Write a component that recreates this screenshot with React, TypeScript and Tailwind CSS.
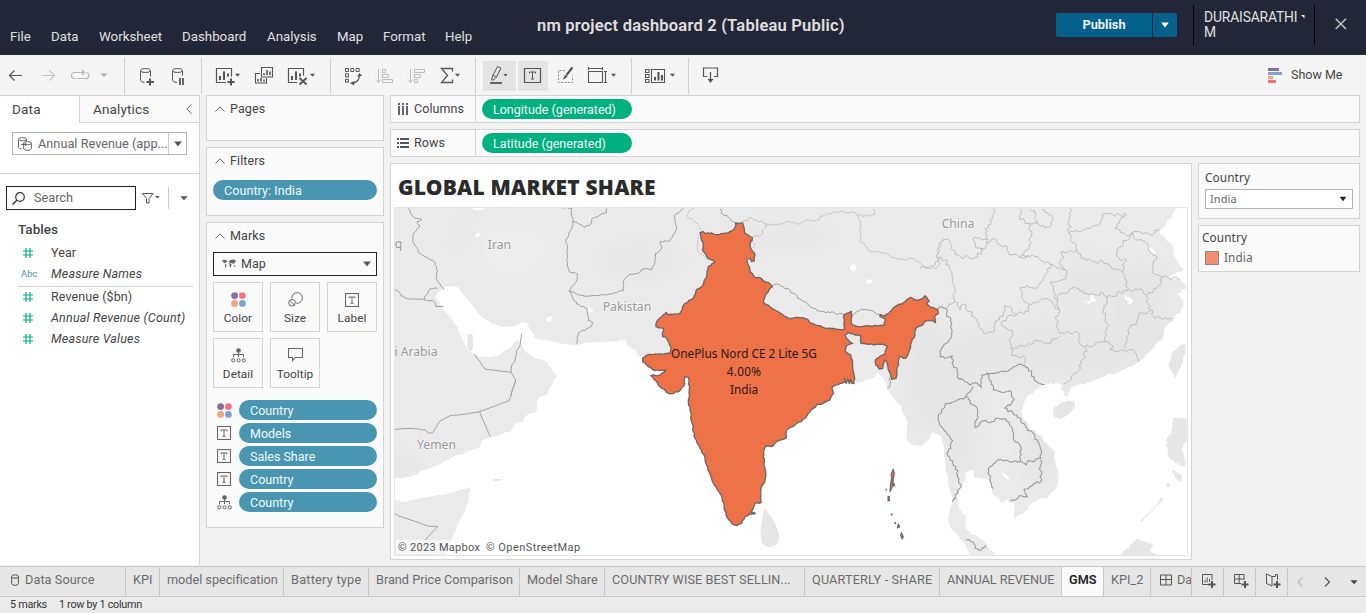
import React from "react";

/* ---------- helpers ---------- */

// Builds a wavy path from control points by displacing evenly spaced steps along each segment.
function jag(points: string, amp: number, step = 7, close = false): string {
  const pts = points.trim().split(/\s+/).map((p) => p.split(",").map(Number));
  if (close) pts.push(pts[0]);
  let seed = 7 + pts.length * 13;
  const rnd = () => {
    seed = (seed * 16807) % 2147483647;
    return seed / 2147483647 - 0.5;
  };
  let d = `M${pts[0][0]} ${pts[0][1]}`;
  for (let i = 1; i < pts.length; i++) {
    const [x0, y0] = pts[i - 1];
    const [x1, y1] = pts[i];
    const len = Math.hypot(x1 - x0, y1 - y0);
    const n = Math.max(1, Math.round(len / step));
    for (let k = 1; k < n; k++) {
      const o = rnd() * amp * 2;
      d += `L${(x0 + ((x1 - x0) * k) / n - ((y1 - y0) / len) * o).toFixed(1)} ${(y0 + ((y1 - y0) * k) / n + ((x1 - x0) / len) * o).toFixed(1)}`;
    }
    d += `L${x1} ${y1}`;
  }
  return close ? d + "Z" : d;
}

const Caret = ({ x, y, c = "#555", s = 3 }: { x: number; y: number; c?: string; s?: number }) => (
  <path d={`M${x - s} ${y - s / 2}h${s * 2}l${-s} ${s + 0.5}z`} fill={c} stroke="none" />
);

const Down = ({ className = "" }: { className?: string }) => (
  <svg viewBox="0 0 8 6" className={`h-[6px] w-[8px] shrink-0 ${className}`}>
    <path d="M0.2 0.5h7.6L4 5.5z" fill="currentColor" />
  </svg>
);

// A stretch of toolbar artwork, drawn in window coordinates.
const Tool = ({ x, className, children }: { x: [number, number]; className: string; children: React.ReactNode }) => (
  <svg viewBox={`${x[0]} 55 ${x[1]} 40`} className={`h-[40px] shrink-0 ${className}`} fill="none" stroke="#555" strokeWidth="1">
    {children}
  </svg>
);
const Sep = () => <div className="mt-[3px] h-[36px] w-px shrink-0 bg-[#d0d0d0]" />;

const TIcon = () => (
  <svg viewBox="0 0 14 14" className="h-[14px] w-[14px]" fill="none" stroke="#666">
    <rect x=".5" y=".5" width="13" height="13" strokeWidth="1.1" />
    <path d="M4 5.200V4h6v1.200M7 4v6.300M5.500 10.300h3" strokeWidth="1" />
  </svg>
);
const ColorIcon = () => (
  <svg viewBox="0 0 15 15" className="h-[15px] w-[15px]">
    <circle cx="3.600" cy="3.600" r="3.400" fill="#86709a" />
    <circle cx="11.400" cy="3.600" r="3.400" fill="#fa6f80" />
    <circle cx="3.600" cy="11.400" r="3.400" fill="#f4a57c" />
    <circle cx="11.400" cy="11.400" r="3.400" fill="#7ea5cf" />
  </svg>
);
const DetailIcon = () => (
  <svg viewBox="0 0 15 15" className="h-[15px] w-[15px]" fill="none" stroke="#666">
    <circle cx="7.500" cy="2.500" r="2.300" fill="#666" stroke="none" />
    <path d="M7.500 4v5M2.500 9.200V6.500h10v2.700" />
    <circle cx="2.200" cy="12.300" r="1.600" />
    <circle cx="7.500" cy="12.300" r="1.600" />
    <circle cx="12.800" cy="12.300" r="1.600" />
  </svg>
);
const SizeIcon = () => (
  <svg viewBox="0 0 15 15" className="h-[15px] w-[15px]" fill="none" stroke="#666">
    <path d="M3.800 6.200A5.300 5.300 0 1 1 8.200 11.200" />
    <circle cx="4" cy="10.800" r="3.300" />
    <path d="M2 8.600l4 4.200" />
  </svg>
);
const TooltipIcon = () => (
  <svg viewBox="0 0 15 15" className="h-[15px] w-[15px]" fill="none" stroke="#666" strokeWidth="1.100">
    <path d="M.5 .5h14v9H7.200L4.500 12.500v-3h-4z" />
  </svg>
);

/* ---------- header ---------- */

const Header = () => (
  <header className="flex h-[55px] shrink-0 bg-[#232636] text-[#e0e0e0]">
    <nav className="flex h-full w-[537px] shrink-0 pl-[10px] pt-[28px] text-[13.3px] leading-[17px]">
      <span className="w-[41px]">File</span>
      <span className="w-[48px]">Data</span>
      <span className="w-[83px]">Worksheet</span>
      <span className="w-[85px]">Dashboard</span>
      <span className="w-[70px]">Analysis</span>
      <span className="w-[46px]">Map</span>
      <span className="w-[62px]">Format</span>
      <span>Help</span>
    </nav>
    <h1 className="w-[519px] shrink-0 whitespace-nowrap pt-[15px] text-[16.500px] font-semibold leading-[21px] tracking-[0.210px]">nm project dashboard 2 (Tableau Public)</h1>
    <div className="mt-[13px] flex h-[24px] w-[121px] shrink-0 overflow-hidden rounded-[2px] bg-[#03618b]">
      <div className="flex w-[96px] items-center justify-center text-[12.800px] font-bold text-[#f0f0f0]">Publish</div>
      <div className="flex flex-1 items-center justify-center border-l border-[#232636] text-white">
        <Down />
      </div>
    </div>
    <div className="ml-[16px] mt-[5px] flex h-[40px] w-[122px] shrink-0 border-x border-black pl-[10px] pt-[5px] text-[13.800px] leading-[15px] tracking-[-0.120px]">
      <div className="w-[97px] shrink-0">
        DURAISARATHI
        <br />M
      </div>
      <svg viewBox="0 0 4 4" className="mt-[5px] h-[4px] w-[4px] shrink-0">
        <path d="M0 0h3.500v3.500z" fill="#e6e6e6" />
      </svg>
    </div>
    <svg viewBox="0 0 12 12" className="ml-[20px] mt-[18px] h-[12px] w-[12px]" stroke="#c3c3c8" strokeWidth="1.500">
      <path d="M.7 .7l10.300 10.300M11 .7L.7 11" />
    </svg>
  </header>
);

/* ---------- toolbar ---------- */

const Toolbar = () => (
  <div className="flex h-[40px] shrink-0 bg-[#f5f5f5]">
    <Tool x={[0, 124]} className="w-[124px]">
      <path d="M22 75.500H9.500M14.500 70.500l-5 5 5 5" strokeWidth="1.200" />
      <path d="M42 75.500h12.500M49.500 70.500l5 5-5 5" stroke="#c4c4c4" strokeWidth="1.200" />
      <path d="M76 78.500h-1.500a3 3 0 0 1 0-6h8.500M77 78.500h8a3 3 0 0 0 1.500-6" stroke="#b8b8b8" strokeWidth="1.200" />
      <path d="M82 69.500v6l3.500-3z" fill="#b8b8b8" stroke="none" />
      <Caret x={104} y={75} c="#b8b8b8" s={3.700} />
    </Tool>
    <Sep />
    <Tool x={[125, 76]} className="w-[76px]">
      <ellipse cx="145.500" cy="70.500" rx="5" ry="2" />
      <path d="M140.500 70.500v10q.5 1.500 4 2M150.500 70.500v6" />
      <path d="M150 78.500v7M146.500 82h7.500" strokeWidth="2" />
      <ellipse cx="177.500" cy="70.500" rx="5" ry="2" />
      <path d="M172.500 70.500v10q.5 1.500 4.500 2M182.500 70.500v5" />
      <path d="M180 78v7M183 78v7" strokeWidth="1.800" />
    </Tool>
    <Sep />
    <Tool x={[202, 128]} className="w-[128px]">
      <path d="M226 82.500h-9.500v-14h15v8" strokeWidth="1.200" />
      <path d="M220 76v4M224 71.500v8.500M228 73.500v3" strokeWidth="2" />
      <path d="M231 78.500v7M227.500 82h7" strokeWidth="2" />
      <Caret x={237.500} y={75} s={2.500} />
      <path d="M260 73.500h-4.500v9.500h11v-5M261.500 67.500h11v9.500h-11z" strokeWidth="1.100" />
      <path d="M264 73v2M267 70v5M270 71.500v3.500M258 79v2.500M261 78v3.500M264 79.500v2" strokeWidth="1.600" />
      <path d="M297 82.500h-8.500v-14h15v7" strokeWidth="1.200" />
      <path d="M292 76v4M296 71.500v8.500M300 73.500v3" strokeWidth="2" />
      <path d="M299.500 78l7 6.500M306.500 78l-7 6.500" strokeWidth="1.800" />
      <Caret x={312.500} y={75} s={2.500} />
    </Tool>
    <Sep />
    <Tool x={[331, 144]} className="w-[144px]">
      <path d="M345.500 68.500h3v3h-3zM350.800 68.500h3v3h-3zM356.200 68.500h3v3h-3zM345.500 73.800h3v3h-3zM345.500 79.200h3v3h-3z" />
      <path d="M359.500 75q0 7-6.500 8" strokeWidth="1.200" />
      <path d="M357 76.500l2.500-3.500 2.500 3zM354.500 81l-4.500 2 4 2.500z" fill="#555" stroke="none" />
      <g stroke="#bdbdbd">
        <path d="M378.500 69v13M376 79.500l2.500 3 2.500-3M382.500 69.500h3v3h-3zM382.500 74.500h6v3h-6zM382.500 79.500h10v3h-10z" />
        <path d="M410.500 69v13M408 79.500l2.500 3 2.500-3M414.500 69.500h10v3h-10zM414.500 74.500h6v3h-6zM414.500 79.500h3v3h-3z" />
      </g>
      <path d="M452.500 71.500v-3h-11l6 7-6 7h11v-3" strokeWidth="1.300" />
      <Caret x={457.500} y={75} s={2.500} />
    </Tool>
    <Sep />
    <Tool x={[476, 155]} className="w-[155px]">
      <path d="M483 61h33v30h-33zM518 61h30v30h-30z" fill="#e4e4e4" stroke="none" />
      <path d="M491.500 80l1.500-5 4.500-8.500 3.500 1.500-4.500 9-3 3zM493 75l3.500 2.500" />
      <path d="M490 83h12" strokeWidth="1.800" />
      <Caret x={505.500} y={75} s={2.200} />
      <path d="M524.500 68.500h16v14h-16z" strokeWidth="1.200" />
      <path d="M529.500 73.500v-1.500h6v1.500M532.500 72v7M531 79h3" />
      <path d="M565 70.500h-6.500v12h14v-7" stroke="#888" strokeDasharray="2 1.500" />
      <path d="M572.500 67.500l-6 7.500" strokeWidth="2.200" />
      <path d="M565.500 75l1.500 1.500-3.500 2.500z" fill="#555" />
      <path d="M588.500 71.500h14v11h-14zM588.500 67v3M602.500 67v3M588.500 68.500h14M604 71.500h3M604 82.500h3M605.500 71.500v11" strokeWidth="1.100" />
      <Caret x={613.500} y={75} s={2.500} />
    </Tool>
    <Sep />
    <Tool x={[632, 56]} className="w-[56px]">
      <path d="M645.500 69.500h3.500v3h-3.500zM645.500 74.500h3.500v3h-3.500zM645.500 79.500h3.500v3h-3.500zM651.500 69.500h13v13h-13z" strokeWidth="1.100" />
      <path d="M655 77v3.500M658.500 72v8.500M662 75v5.500" strokeWidth="2" />
      <Caret x={672.500} y={75} s={2.500} />
    </Tool>
    <Sep />
    <Tool x={[689, 578]} className="w-[578px]">
      <path d="M707 76.500h-3.500v-8.500h14v8.500h-3.500" strokeWidth="1.200" />
      <path d="M710.500 72v8" strokeWidth="1.300" />
      <path d="M707.500 79h6l-3 4z" fill="#555" stroke="none" />
    </Tool>
    <div className="flex items-center whitespace-nowrap pt-[1px] text-[12.500px] text-[#444]">
      <svg viewBox="0 0 15 15" className="mb-[1px] mr-[9px] h-[15px] w-[15px]">
        <path d="M1 0h11v3H1z" fill="#86709a" />
        <path d="M1 4h14v3H1z" fill="#7ea5cf" />
        <path d="M1 8h5v3H1z" fill="#f4a57c" />
        <path d="M1 12h8v3H1z" fill="#fa6f80" />
      </svg>
      Show Me
    </div>
  </div>
);

/* ---------- data pane ---------- */

const Hash = () => (
  <svg viewBox="0 0 10 10" className="mb-[2px] ml-[2px] h-[10px] w-[10px]" stroke="#00b180">
    <path d="M3 0v10M7 0v10M0 3h10M0 7h10" strokeWidth="1.200" />
  </svg>
);

const Field = ({ label, abc, italic }: { label: string; abc?: boolean; italic?: boolean }) => (
  <div className="flex h-[21px] items-center">
    <div className="w-[30px] shrink-0 text-[9.500px] text-[#4996b2]">{abc ? "Abc" : <Hash />}</div>
    <span className={italic ? "whitespace-nowrap text-[12.500px] italic tracking-[0.200px]" : "text-[12.500px] tracking-[0.100px]"}>{label}</span>
  </div>
);

const DataPane = () => (
  <aside className="flex w-[200px] shrink-0 flex-col border-r border-[#d4d4d4] bg-white text-[#444]">
    <div className="flex h-[28px] shrink-0 text-[13.500px] leading-[28px]">
      <div className="w-[79px] border-t border-[#d4d4d4] pl-[12px] leading-[26px] tracking-[0.200px]">Data</div>
      <div className="flex flex-1 items-center border-b border-l border-t border-[#d4d4d4] bg-[#fafafa] pl-[13px] tracking-[0.150px]">
        Analytics
        <svg viewBox="0 0 6 10" className="ml-auto mr-[7px] h-[10px] w-[6px]" fill="none" stroke="#666">
          <path d="M5.500 .5L.8 5l4.700 4.500" />
        </svg>
      </div>
    </div>
    <div className="flex h-[51px] shrink-0 items-start border-b border-[#d4d4d4] pl-[12px] pt-[9px]">
      <div className="flex h-[23px] w-[175px] items-center border border-[#b5b5b5] text-[12.700px] text-[#666]">
        <svg viewBox="0 0 14 14" className="ml-[5px] h-[14px] w-[14px] shrink-0" fill="none" stroke="#666">
          <ellipse cx="4.500" cy="2.200" rx="4" ry="1.600" />
          <path d="M.5 2.200v8q.5 1.500 3 1.700M8.500 2.200v2" />
          <ellipse cx="9.500" cy="6.200" rx="3.900" ry="1.600" />
          <path d="M5.600 6.200v5.500q1 1.700 4 1.700t3.800-1.700V6.200M3 7.500h5.500M7 6l1.700 1.500L7 9" />
        </svg>
        <span className="ml-[6px] w-[130px] shrink-0 whitespace-nowrap tracking-[0.030px]">Annual Revenue (app...</span>
        <div className="flex h-full flex-1 items-center justify-center border-l border-[#ccc] text-[#555]">
          <Down />
        </div>
      </div>
    </div>
    <div className="flex shrink-0 pl-[6px] pt-[12px]">
      <div className="flex h-[24px] w-[130px] shrink-0 items-center border border-[#222] text-[12.700px] text-[#666]">
        <svg viewBox="0 0 13 13" className="ml-[5px] mr-[9px] h-[13px] w-[13px]" fill="none" stroke="#333" strokeWidth="1.200">
          <circle cx="8" cy="5" r="4.300" />
          <path d="M5 8L.5 12.500" strokeWidth="1.500" />
        </svg>
        Search
      </div>
      <svg viewBox="136 186 63 24" className="h-[24px] w-[63px] shrink-0" fill="none" stroke="#555">
        <path d="M142.500 193.500h10.500l-4 5v4.500h-2.500v-4.500z" />
        <Caret x={157.500} y={197} s={2.200} />
        <path d="M168.500 187v22" stroke="#ccc" />
        <Caret x={184} y={198} s={3.700} />
      </svg>
    </div>
    <div className="pl-[18px] pt-[11px] text-[13.500px] font-medium leading-[16px]">Tables</div>
    <div className="mr-[6px] pl-[21px] pt-[6px]">
      <Field label="Year" />
      <Field label="Measure Names" abc italic />
      <div className="-ml-[3px] mt-[1px] h-px bg-[#d4d4d4]" />
      <Field label="Revenue ($bn)" />
      <Field label="Annual Revenue (Count)" italic />
      <Field label="Measure Values" italic />
    </div>
  </aside>
);

/* ---------- cards ---------- */

const CardTitle = ({ children }: { children: React.ReactNode }) => (
  <div className="flex items-center text-[12.500px] leading-[16px] tracking-[0.100px] text-[#444]">
    <svg viewBox="0 0 10 6" className="ml-[8px] mr-[5px] h-[6px] w-[10px]" fill="none" stroke="#666">
      <path d="M.5 5.500L5 .8l4.500 4.700" />
    </svg>
    {children}
  </div>
);

const Pill = ({ children, className }: { children: React.ReactNode; className: string }) => (
  <div className={`flex h-[20px] items-center rounded-full pl-[11px] pt-[2px] text-[12.500px] leading-[18px] text-[#f4f8fa] ${className}`}>{children}</div>
);

const MarkButton = ({ icon, label }: { icon: React.ReactNode; label: string }) => (
  <div className="flex h-[50px] w-[50px] flex-col items-center border border-[#d4d4d4] pt-[9px] text-[11.800px] leading-[14px] tracking-[0.050px] text-[#444]">
    <div className="flex h-[15px] items-center">{icon}</div>
    <span className="mt-[4px]">{label}</span>
  </div>
);

const MarkRow = ({ icon, label }: { icon: React.ReactNode; label: string }) => (
  <div className="flex items-center">
    <div className="flex w-[30px] shrink-0 items-center justify-center">{icon}</div>
    <Pill className="w-[138px] bg-[#4996b2]">{label}</Pill>
  </div>
);

const Cards = () => (
  <div className="flex w-[178px] shrink-0 flex-col gap-[6px]">
    <section className="h-[46px] border border-[#d4d4d4] bg-[#fafafa] pt-[5px]">
      <CardTitle>Pages</CardTitle>
    </section>
    <section className="h-[69px] border border-[#d4d4d4] bg-[#fafafa] pt-[5px]">
      <CardTitle>Filters</CardTitle>
      <Pill className="ml-[6px] mt-[11px] w-[164px] bg-[#4996b2] tracking-[0.080px]">Country: India</Pill>
    </section>
    <section className="h-[306px] border border-[#d4d4d4] bg-[#fafafa] pt-[5px]">
      <CardTitle>Marks</CardTitle>
      <div className="ml-[6px] mt-[8px] flex h-[24px] w-[164px] items-center border border-[#222] text-[12.500px] text-[#444]">
        <svg viewBox="0 0 14 10" className="ml-[8px] mr-[5px] h-[10px] w-[14px]" fill="#666">
          <path d="M0 1.500l2.500-.7 2 .5.800.9-1.300 1.300-.8.9-1.200-.6L1 3zM3.200 5l1.500.8-.7 2.200-.8 1-.3-2.500zM7 2l1.500-1 2.500-.5 2.800.7-.4 1.500-1.300 1.500-1 .8-1-1H8.500L7.200 3.200zM7 4.300h1.800l.8 1.200-.8 2.400-.9.300L7.500 6zM11.800 6.200l1.600.2-.2 1.400-1.400-.2z" />
        </svg>
        Map
        <Down className="ml-auto mr-[5px] text-[#555]" />
      </div>
      <div className="ml-[6px] mt-[6px] grid grid-cols-[50px_50px_50px] gap-x-[7px] gap-y-[6px]">
        <MarkButton icon={<ColorIcon />} label="Color" />
        <MarkButton icon={<SizeIcon />} label="Size" />
        <MarkButton icon={<TIcon />} label="Label" />
        <MarkButton icon={<DetailIcon />} label="Detail" />
        <MarkButton icon={<TooltipIcon />} label="Tooltip" />
      </div>
      <div className="ml-[2px] mt-[12px] flex flex-col gap-[3px]">
        <MarkRow icon={<ColorIcon />} label="Country" />
        <MarkRow icon={<TIcon />} label="Models" />
        <MarkRow icon={<TIcon />} label="Sales Share" />
        <MarkRow icon={<TIcon />} label="Country" />
        <MarkRow icon={<DetailIcon />} label="Country" />
      </div>
    </section>
  </div>
);

/* ---------- map ---------- */

const INDIA =
  "180,98 190,95 197,101 215,99 230,104 250,100 270,95 285,83 287,69 308,69 315,100 337,113 330,135 335,150 345,165 343,182 335,185 330,175 320,178 325,195 330,215 345,232 357,232 370,243 385,248 397,260 380,280 370,308 390,320 405,330 425,342 450,357 475,352 500,357 512,370 540,377 560,385 590,388 613,388 612,345 620,340 634,334 635,350 634,370 645,377 660,380 700,378 733,375 735,357 720,350 720,343 735,348 750,335 770,317 785,312 800,300 812,292 825,300 845,297 855,287 868,303 860,310 872,322 893,328 895,340 883,350 887,368 878,360 860,362 850,372 828,384 825,405 815,425 808,450 797,475 778,470 773,500 768,535 755,538 750,520 745,510 740,485 733,480 728,505 718,507 708,495 706,480 722,468 735,462 742,440 735,435 680,432 663,430 663,408 645,405 625,397 615,405 625,420 638,430 620,437 615,452 633,465 638,500 643,530 642,551 635,549 631,538 628,551 623,537 619,550 614,535 612,547 600,550 577,560 580,580 570,600 555,607 530,615 510,635 495,655 465,675 440,690 438,715 410,725 395,740 378,738 370,755 372,790 377,815 375,840 362,870 363,908 345,910 333,938 346,940 330,942 315,950 305,970 290,977 275,970 258,945 252,910 240,880 220,850 207,815 195,775 180,745 165,715 155,665 150,630 145,600 148,565 145,532 135,530 133,555 120,572 100,580 85,580 60,560 45,540 32,527 60,525 78,510 65,510 45,512 25,500 8,485 8,475 22,465 60,462 90,460 92,440 80,415 68,410 70,385 48,380 50,365 65,350 78,337 85,345 120,340 135,310 160,295 170,268 185,260 200,230 205,200 225,187 215,180 200,170 187,150 190,130 183,115";

const WEST_SEA =
  "440,291 448,286 458,287 464,295 470,302 477,312 485,319 493,324 502,327 510,327 516,325 523,322 528,324 531,331 536,339 553,342 573,345 597,342 625,340 629,347 635,349 638,356 646,355 700,370 800,375 853,384 867,380 875,377 877,372 883,377 887,388 895,400 902,407 903,413 907,420 907,440 913,445 922,446 930,438 933,432 942,437 944,453 948,483 953,500 948,520 950,527 958,535 967,548 970,556 445,556 452,538 457,527 468,503 470,487 462,489 450,493 427,497 415,500 403,502 393,498 393,479 410,477 424,470 437,465 453,457 467,452 480,447 483,440 490,437 510,432 515,423 523,422 528,414 536,412 538,398 547,395 550,387 557,376 552,369 547,362 533,357 525,351 521,343 518,340 508,349 497,356 480,357 475,354 468,351 462,339 458,327 445,311 438,301 435,297";

const EAST_SEA =
  "235,1068 180,1015 150,1000 140,990 135,945 115,925 110,890 130,850 135,815 160,810 165,835 190,835 210,850 220,885 240,905 262,898 285,915 280,958 310,940 340,905 385,890 410,860 415,810 400,750 365,710 325,680 305,640 315,600 345,570 375,550 425,552 430,585 445,588 450,565 500,548 545,530 600,515 650,490 690,455 730,410 740,380 755,365 785,325 790,300 775,280 800,260 780,240 745,230 790,210 770,180 760,145 735,110 718,95 740,65 775,22 810,22 810,1068";

const COUNTRY_W = [
  "55,343 62,360 75,372 95,377 82,382 88,400 70,420 68,442 80,460 88,478 110,490 135,505 142,530 138,552 150,570 162,587",
  "15,587 45,612 102,617 130,620 137,637 160,637",
  "102,617 120,585 143,583",
  "518,343 545,343 548,383 575,393 582,400 603,390 605,375 630,363 650,355 650,343",
  "548,383 545,405 527,438 533,465 530,500 537,532 563,540 562,555 537,592",
  "537,592 560,600 585,607 620,605 640,602 665,600 700,590 700,560 720,540 745,538 760,525 785,527 795,505 795,480 815,465 810,443 840,440 860,405 852,365 880,343",
  "537,592 560,630 592,645 595,680 608,685 605,697 590,705 565,717 558,750",
];
const COUNTRY_GULF = ["253,782 285,825 363,835 377,857 363,905", "363,835 365,815 375,800 380,770 390,755 395,720"];

const COUNTRY_SW = ["377,0 358,62 268,95 230,102 180,107 150,123 128,158 115,160 107,150 60,145 15,148", "268,95 301,170", "15,400 25,408 70,422 113,438 143,440 105,480"];

const COUNTRY_M = [
  "397,260 410,252 430,260 460,280 490,305 520,325 545,335 570,338 612,343",
  "636,352 650,335 680,328 700,333 718,343",
  "240,27 248,43 270,55 287,69",
  "748,515 750,560 742,565",
];

const COUNTRY_E = [
  "55,328 65,320 78,325 80,348 93,355 95,405 80,430 65,445 60,470 75,475 97,468 100,495 112,510 112,530 130,540 150,555 165,548 185,563",
  "185,563 185,525 200,520 215,520 240,515 265,513 280,500 300,493 325,505 335,520 342,540 375,553",
  "200,522 215,545 220,570 245,577 270,572 283,598 275,612 253,625",
  "253,625 290,645 320,685 345,710 360,740 363,775 345,782 325,782 318,795 302,785 302,740 280,715 277,685 258,657 235,655 210,668 190,662 165,683 172,645 170,622 150,610 145,597 137,590 160,560",
  "137,590 105,605 75,612 65,635 55,650 65,680 80,700 98,722 93,745 80,760 90,780 108,800 112,825 123,862 97,905",
  "302,783 230,782 205,808 210,840 220,866",
  "361,780 363,845 345,850 330,860 312,868 322,890 305,887 290,897 270,904",
  "137,1020 160,1027 165,1045 183,1050 197,1035",
];

const PROVINCES_M = ["308,69 325,55 350,60 378,72 400,75 430,72 450,65 475,73 510,60 530,60 560,42 600,35 640,37 655,47 662,70 660,120 690,153 730,160 780,177 820,175 850,197 870,207 893,200 900,175", "337,113 350,108 365,105 378,72", "655,47 690,48 703,43 700,28", "895,178 893,145 910,118"];

const PROVINCES_E = [
  "0,205 20,205 40,198 55,175 60,130 75,118 90,125 98,150 120,170 145,170 160,175 185,155 200,125 225,115 240,135 262,140 270,165 300,172 345,170 370,185 400,195 435,208 440,235 390,248 400,270 412,300 415,330",
  "55,175 75,180 95,215 103,260 105,305 85,320 78,325",
  "105,305 120,330 130,312 150,335 165,355 180,385 195,402 225,393 225,365 250,340 255,315 275,325 290,345 270,345 245,365 250,378 275,390 272,430 280,450 275,465 315,475 315,493",
  "220,25 218,55 205,75 195,100 205,120 180,112 160,115 165,135 190,152",
  "300,25 298,50 325,70 350,68 345,40 330,30",
  "345,70 375,85 395,75 393,45 365,30",
  "325,72 335,110 327,135 310,165",
  "450,25 450,60 447,100 470,150 485,177 520,185 550,185 575,205 605,215 620,240 620,272",
  "447,100 500,85 540,72 548,42 600,45 620,45 585,85 610,98 630,105 650,95 690,105 718,85",
  "470,150 425,155 430,175 420,195 440,215",
  "390,190 385,215 370,235 350,265 330,262 320,255 300,265 305,295 325,312 365,297 395,305 405,325 415,325",
  "290,345 325,335 330,315",
  "415,300 420,282 455,265 500,280 530,285 550,280 560,300 550,330 562,370 558,425",
  "415,325 410,360 420,400 470,395 480,430 495,443",
  "275,450 320,435 350,420 385,430 420,408",
  "495,443 525,432 565,425 580,440 570,450 610,450 640,450 655,485",
  "497,445 485,490 465,520 430,552",
  "560,295 620,272 655,268 680,285 690,330 655,345 650,365 630,385 615,445",
  "690,330 705,355 735,352 755,362",
  "685,285 710,265 728,232 780,240",
  "630,105 610,130 590,160 600,180 620,180 605,215",
  "630,100 655,120 680,130 690,155 712,175 700,195 700,220 728,232",
  "300,172 325,165",
];

const Label = ({ x, y, children }: { x: number; y: number; children: string }) => (
  <text x={x} y={y} fontSize="12.200" fill="#9a9a9a" stroke="#f2f2f2" strokeWidth="2" paintOrder="stroke" textAnchor="middle" fontFamily="'Noto Sans', sans-serif">
    {children}
  </text>
);

const Borders = ({ lines, amp, w, c, dash }: { lines: string[]; amp: number; w: number; c: string; dash?: string }) => (
  <g fill="none" stroke={c} strokeWidth={w} strokeDasharray={dash} strokeLinejoin="round">
    {lines.map((l, i) => (
      <path key={i} d={jag(l, amp)} />
    ))}
  </g>
);

const WorldMap = () => (
  <svg viewBox="395 208 792 347" className="block h-[347px] w-[792px]">
    <defs>
      <filter id="soft" x="-50%" y="-50%" width="200%" height="200%">
        <feGaussianBlur stdDeviation="12" />
      </filter>
    </defs>
    <rect x="394" y="207" width="795" height="349" fill="#eaeaea" />
    <g filter="url(#soft)" fill="#e5e5e5">
      <ellipse cx="1060" cy="350" rx="120" ry="28" />
      <ellipse cx="925" cy="370" rx="22" ry="60" />
      <ellipse cx="1090" cy="280" rx="90" ry="20" />
      <ellipse cx="470" cy="240" rx="20" ry="30" fill="#e8e8e8" />
      <ellipse cx="640" cy="260" rx="45" ry="18" fill="#e7e7e7" />
      <ellipse cx="1140" cy="320" rx="30" ry="28" />
      <ellipse cx="780" cy="235" rx="60" ry="14" fill="#e7e7e7" />
      <ellipse cx="400" cy="465" rx="20" ry="10" />
      <ellipse cx="960" cy="420" rx="20" ry="60" />
      <ellipse cx="1040" cy="450" rx="14" ry="40" fill="#e3e3e3" />
      <ellipse cx="1030" cy="275" rx="35" ry="12" fill="#ededed" />
      <ellipse cx="510" cy="250" rx="40" ry="22" fill="#ededed" />
      <ellipse cx="840" cy="290" rx="50" ry="8" fill="#ececec" />
    </g>
    <g fill="#fff">
      <path d={jag(WEST_SEA, 0.8, 4, true)} />
      <g transform="translate(920 200) scale(.33333)">
        <path d={jag(EAST_SEA, 4, 9, true)} />
        <path d="M245,815l15,10 10,12-8,2-12-12zM490,303l12,2 8,-5 4,-14 6,-2 2,12 8,2 -6,8 -12,0 -6,5zM615,285l8,8 6,-4 4,8 8,3 -6,8 2,6 -8,-3 -6,3 2,-12 -10,-4zM680,138l20,10 8,15-14-8z" />
      </g>
      <path d="M475 236l3-4 3 3-4 3zM546 318l6-2-1 5-3 1zM587 310l3-4 1 3 3 2-5 2zM849 267l4-3 4 2-2 5-4-1zM866 280l8-1-3 4-5 1zM472 208h13l-4 2h-7z" />
    </g>
    <g fill="#e6e6e6">
      <path d="M468 335q3-3 5 1v11q-1 5-4 4-3-5-1-16z" />
      <path d="M764 508q8 8 13 20t-1 17q-8 5-14-2-3-10 0-22z" />
      <path d="M493 479h10l-4 2h-6z" />
      <g transform="translate(920 200) scale(.33333)">
        <path d={jag("398,628 425,605 462,603 465,620 445,645 420,658 400,648", 2, 9, true)} />
        <path d={jag("795,432 797,460 775,515 765,535 745,495 755,460 780,435", 2, 9, true)} />
        <path d={jag("760,655 802,655 802,720 785,750 797,790 795,800 780,795 745,770 738,720 755,700", 3, 9, true)} />
        <path d={jag("755,810 785,825 782,845 765,835", 2, 9, true)} />
        <path d="M725 890l5 8-65 67-5-2 46-42z" />
        <path d={jag("600,1068 650,1015 700,1035 690,1050 715,1068", 3, 9, true)} />
        <path d="M740 850h8v10l-8 2z" />
      </g>
    </g>
    <g transform="translate(390 94) scale(.33333)">
      <Borders lines={COUNTRY_W} amp={2.200} w={3} c="#a0a0a0" />
      <Borders lines={COUNTRY_GULF} amp={0.800} w={3} c="#a0a0a0" />
    </g>
    <g transform="translate(390 380) scale(.33333)">
      <Borders lines={COUNTRY_SW} amp={0.500} w={3} c="#a0a0a0" />
    </g>
    <g transform="translate(640 200) scale(.33333)">
      <Borders lines={PROVINCES_M} amp={4} w={2.400} c="#bcbcbc" />
      <Borders lines={["205,180 180,160 172,150 175,108 187,90 160,60 140,52 145,35 165,25", "315,100 345,130 335,150", "330,215 345,225"]} amp={2} w={2.600} c="#aaa" dash="5 4" />
      <Borders lines={COUNTRY_M} amp={3.500} w={3} c="#a0a0a0" />
    </g>
    <g transform="translate(920 200) scale(.33333)">
      <Borders lines={PROVINCES_E} amp={6} w={2.400} c="#b4b4b4" />
      <Borders lines={COUNTRY_E} amp={4} w={3.200} c="#999" />
    </g>
    <g transform="translate(640 200) scale(.33333)" fill="#ee7248" stroke="#70665f" strokeWidth="4" strokeLinejoin="round">
      <path d={jag(INDIA, 2, 7, true)} />
      <path d="M760 807l3 15-5 20-5-18zM756 830l4 12-4 20-6 14 2-26zM744 890h4v12h-4zM761 850l3 6-4 2zM738 868h1v2h-1zM754 942h2v3h-2zM765 968h2v3h-2zM775 972l4 8-7 4zM784 998l6 12-3 7-5-10z" strokeWidth="3.500" />
    </g>
    <Label x={499.500} y={248.500}>Iran</Label>
    <Label x={627} y={311}>Pakistan</Label>
    <Label x={958} y={227.500}>China</Label>
    <Label x={416} y={356}>i Arabia</Label>
    <Label x={398.500} y={248}>q</Label>
    <Label x={436.500} y={449}>Yemen</Label>
    <g fontFamily="'Noto Sans', sans-serif" fontSize="11.800" fill="#2a1a14" textAnchor="middle">
      <text x="744" y="357.500">OnePlus Nord CE 2 Lite 5G</text>
      <text x="744" y="375.500" letterSpacing=".3">
        4.00%
      </text>
      <text x="744" y="393.500">India</text>
    </g>
    <rect x="396" y="540" width="187" height="14" fill="#fff" fillOpacity=".6" />
    <text x="398" y="551" fontSize="11" fill="#555" fontFamily="Roboto, sans-serif" letterSpacing=".3">
      © 2023 Mapbox
    </text>
    <text x="486" y="551" fontSize="11" fill="#555" fontFamily="Roboto, sans-serif" letterSpacing=".45">
      © OpenStreetMap
    </text>
  </svg>
);

/* ---------- view area ---------- */

const Shelf = ({ icon, label, pill }: { icon: React.ReactNode; label: string; pill: string }) => (
  <div className="flex h-[28px] shrink-0 border border-[#d4d4d4] bg-[#fafafa]">
    <div className="flex w-[85px] shrink-0 items-center border-r border-[#d4d4d4] pl-[6px] text-[12.500px] text-[#444]">
      <svg viewBox="0 0 12 12" className="mb-[1px] mr-[5px] h-[12px] w-[12px]" stroke="#555" strokeWidth="2">
        {icon}
      </svg>
      <span className="tracking-[0.080px]">{label}</span>
    </div>
    <Pill className="ml-[6px] mt-[3px] w-[150px] bg-[#00b180]">{pill}</Pill>
  </div>
);

const View = () => (
  <main className="flex w-[970px] shrink-0 flex-col">
    <Shelf label="Columns" pill="Longitude (generated)" icon={<path d="M2 0v2M2 3v9M6 0v2M6 3v9M10 0v2M10 3v9" strokeWidth="1.800" />} />
    <div className="h-[6px] shrink-0" />
    <Shelf label="Rows" pill="Latitude (generated)" icon={<path d="M0 2h2M3 2h9M0 6h2M3 6h9M0 10h2M3 10h9" strokeWidth="1.800" />} />
    <div className="mt-[6px] flex items-start">
      <section className="h-[397px] w-[802px] shrink-0 border border-[#d4d4d4] bg-white">
        <h2 className="flex h-[43px] items-center whitespace-nowrap pl-[7px] pt-[4px] font-['Noto_Sans',sans-serif] text-[21px] font-black tracking-[0.200px] text-[#2b2b2b]">GLOBAL MARKET SHARE</h2>
        <div className="ml-[3px] h-[349px] w-[794px] border border-[#e6e6e6]">
          <WorldMap />
        </div>
      </section>
      <div className="ml-[6px] flex w-[162px] shrink-0 flex-col gap-[6px] font-['Noto_Sans',sans-serif] text-[11.800px] text-[#444]">
        <div className="h-[56px] border border-[#d4d4d4] bg-[#fafafa] pl-[6px] pt-[5px] leading-[16px]">
          <div className="tracking-[0.100px]">Country</div>
          <div className="mt-[4px] flex h-[20px] w-[148px] items-center border border-[#b5b5b5] bg-white pl-[4px] pr-[5px] text-[11px]">
            <span className="mr-auto tracking-[0.100px] text-[#666]">India</span>
            <Down className="scale-90 text-[#222]" />
          </div>
        </div>
        <div className="h-[47px] border border-[#d4d4d4] bg-[#fafafa] pl-[3px] pt-[3px] leading-[16px]">
          <div className="tracking-[0.100px]">Country</div>
          <div className="flex items-center pl-[3px] pt-[4px]">
            <div className="mr-[5px] mt-[1px] h-[14px] w-[14px] border border-[#8a8a8a] bg-[#f28e6c]" />
            <span className="tracking-[0.100px] text-[#666]">India</span>
          </div>
        </div>
      </div>
    </div>
  </main>
);

/* ---------- sheet tabs ---------- */

const Tab = ({ children, className, active }: { children: React.ReactNode; className: string; active?: boolean }) => (
  <div
    className={`flex h-full shrink-0 items-center overflow-hidden whitespace-nowrap border-r border-[#c8c8c8] pb-[3px] pl-[7px] ${active ? "bg-[#fafafa] font-semibold text-[#222]" : "text-[#6c6c6c]"} ${className}`}
  >
    {children}
  </div>
);

const SheetIcon = ({ children }: { children: React.ReactNode }) => (
  <div className="flex h-full w-[32px] shrink-0 items-center justify-center border-r border-[#c8c8c8]">
    <svg viewBox="0 0 16 16" className="mb-[2px] ml-[2px] h-[16px] w-[16px]" fill="none" stroke="#555">
      {children}
    </svg>
  </div>
);

const Tabs = () => (
  <footer className="shrink-0">
    <div className="flex h-[31px] border-y border-[#c8c8c8] bg-[#e6e6e6] text-[12.700px]">
      <Tab className="w-[126px] tracking-[0.080px]">
        <svg viewBox="0 0 8 12" className="ml-[3px] mr-[5px] h-[12px] w-[10px]" fill="none" stroke="#555">
          <ellipse cx="4" cy="2.500" rx="3.400" ry="1.700" />
          <path d="M.6 2.500v7q.6 1.900 3.400 1.900t3.400-1.900v-7" />
        </svg>
        Data Source
      </Tab>
      <Tab className="w-[34px]">KPI</Tab>
      <Tab className="w-[124px] tracking-[-0.020px]">model specification</Tab>
      <Tab className="w-[85px] tracking-[0.250px]">Battery type</Tab>
      <Tab className="w-[151px]">Brand Price Comparison</Tab>
      <Tab className="w-[85px]">Model Share</Tab>
      <Tab className="w-[200px] tracking-[0.080px]">COUNTRY WISE BEST SELLIN...</Tab>
      <Tab className="w-[135px] tracking-[0.150px]">QUARTERLY - SHARE</Tab>
      <Tab className="w-[122px]">ANNUAL REVENUE</Tab>
      <Tab className="w-[42px]" active>
        GMS
      </Tab>
      <Tab className="w-[47px]">KPI_2</Tab>
      <Tab className="w-[41px]">
        <svg viewBox="0 0 12 12" className="ml-[2px] mr-[5px] h-[12px] w-[12px] shrink-0" fill="none" stroke="#555">
          <path d="M.5 1h11v10H.5zM.5 5.500h11M6 1v10" />
        </svg>
        Da
      </Tab>
      <SheetIcon>
        <path d="M8 11.500H1.500v-10h9.500V7" />
        <path d="M4 7v2.500M6.200 4.500v5M8.500 6v3" />
        <path d="M11 8v7M7.500 11.500h7" strokeWidth="2" />
      </SheetIcon>
      <SheetIcon>
        <path d="M8 10.500H1.500v-9h9.500V7M1.500 6h9.500M6.200 1.500v9" />
        <path d="M12 8v7M8.500 11.500h7" strokeWidth="2" />
      </SheetIcon>
      <SheetIcon>
        <path d="M7 3.500L1.500 1v9.500L7 13zM7 3.500h3.500V1.500h2V7" />
        <path d="M12 8v7M8.500 11.500h7" strokeWidth="2" />
      </SheetIcon>
      <svg viewBox="1288 567 78 29" className="h-[29px] w-[78px] shrink-0" fill="none">
        <path d="M1302.500 577.500l-4.500 4.500 4.500 4.500" stroke="#bbb" strokeWidth="1.200" />
        <path d="M1325 577.500l4.500 4.500-4.500 4.500" stroke="#555" strokeWidth="1.200" />
        <Caret x={1354} y={582} c="#444" s={3.500} />
      </svg>
    </div>
    <div className="flex h-[16px] gap-[12px] bg-[#ebebeb] pl-[10px] text-[10.800px] leading-[16px] tracking-[-0.270px] text-[#333]">
      <span>5 marks</span>
      <span>1 row by 1 column</span>
    </div>
  </footer>
);

export default function App() {
  return (
    <div className="flex h-[613px] w-[1366px] flex-col overflow-hidden bg-[#f2f2f2] font-[Roboto,sans-serif]">
      <Header />
      <Toolbar />
      <div className="flex h-[471px] shrink-0 items-start">
        <div className="flex h-[470px]">
          <DataPane />
        </div>
        <div className="w-[6px] shrink-0" />
        <Cards />
        <div className="w-[6px] shrink-0" />
        <View />
      </div>
      <Tabs />
    </div>
  );
}
